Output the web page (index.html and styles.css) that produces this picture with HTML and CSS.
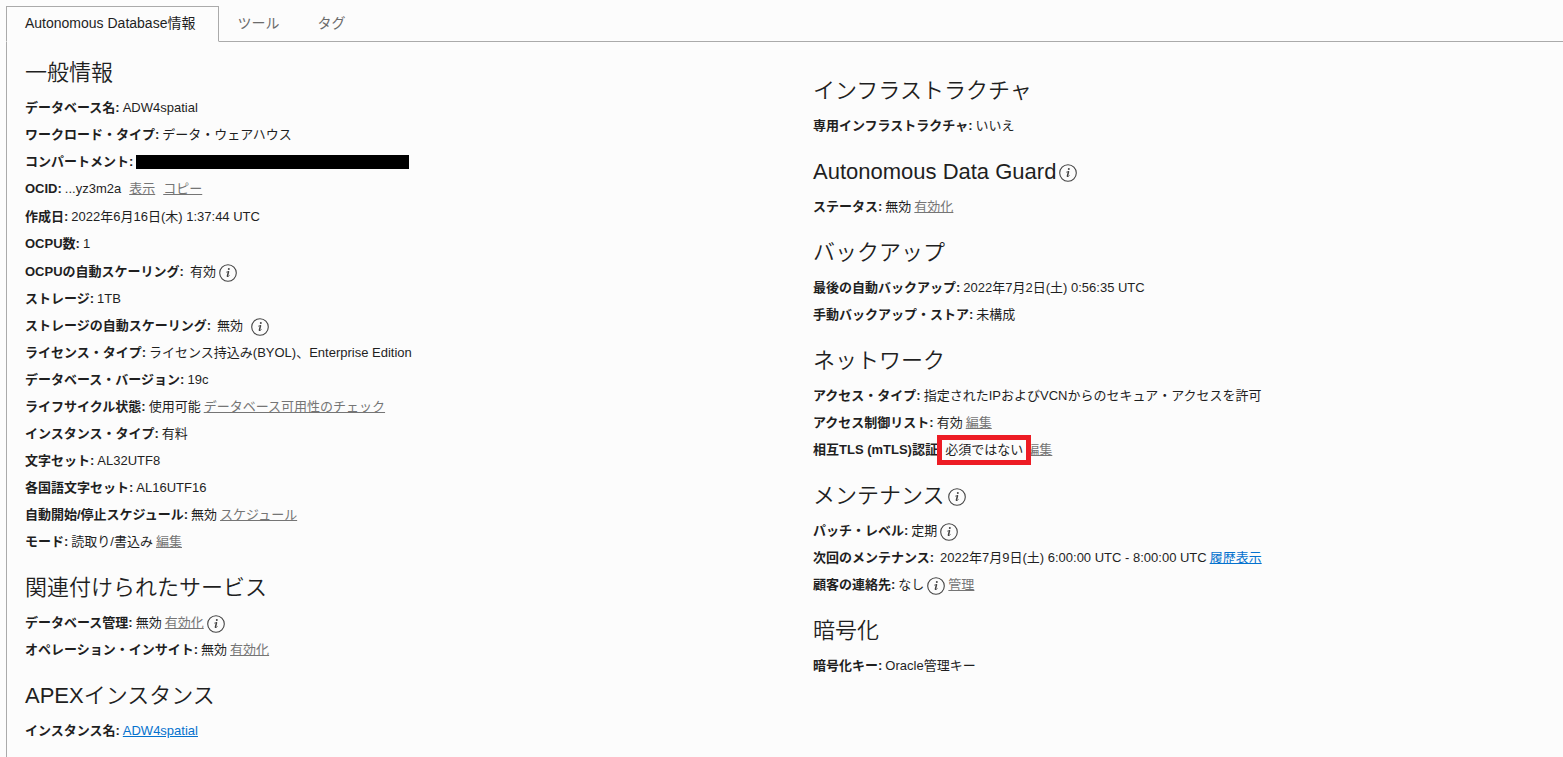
FILE: index.html
```html
<!DOCTYPE html>
<html lang="ja">
<head>
<meta charset="utf-8">
<meta name="viewport" content="width=device-width, initial-scale=1">
<title>Autonomous Database情報</title>
<link rel="stylesheet" href="styles.css">
</head>
<body>
<svg class="sprite" aria-hidden="true">
  <symbol id="info" viewBox="0 0 18 18">
    <circle cx="9" cy="9" r="8.3" fill="none" stroke="currentColor" stroke-width="1.1"/>
    <circle cx="9.8" cy="5.1" r="1" fill="currentColor"/>
    <path d="M7.6 8.1 9.4 7.6" fill="none" stroke="currentColor" stroke-width=".8" stroke-linecap="round"/>
    <path d="M9.5 7.8 8.4 12.2" fill="none" stroke="currentColor" stroke-width="1.5" stroke-linecap="round"/>
    <path d="M8.3 12.6Q8.9 13.2 10.3 11.7" fill="none" stroke="currentColor" stroke-width=".8" stroke-linecap="round"/>
  </symbol>
</svg>
<main class="details">
  <div class="tabs" role="tablist">
    <button class="tab tab-active" type="button" role="tab" aria-selected="true">Autonomous Database情報</button>
    <button class="tab" type="button" role="tab" aria-selected="false">ツール</button>
    <button class="tab" type="button" role="tab" aria-selected="false">タグ</button>
  </div>
  <div class="panel" role="tabpanel">
    <div class="column">
      <section class="group">
        <h2 class="heading">一般情報</h2>
        <dl class="list">
          <div class="row"><dt>データベース名:</dt><dd>ADW4spatial</dd></div>
          <div class="row"><dt>ワークロード・タイプ:</dt><dd>データ・ウェアハウス</dd></div>
          <div class="row"><dt>コンパートメント:</dt><dd class="redacted"></dd></div>
          <div class="row row-tall"><dt>OCID:</dt><dd class="spaced">...yz3m2a <a class="link" href="#">表示</a> <a class="link" href="#">コピー</a></dd></div>
          <div class="row"><dt>作成日:</dt><dd>2022年6月16日(木) 1:37:44 UTC</dd></div>
          <div class="row row-tall"><dt>OCPU数:</dt><dd>1</dd></div>
          <div class="row"><dt class="wide">OCPUの自動スケーリング:</dt><dd>有効 <button class="info" type="button" aria-label="情報"><svg><use href="#info"/></svg></button></dd></div>
          <div class="row"><dt>ストレージ:</dt><dd>1TB</dd></div>
          <div class="row"><dt class="wide">ストレージの自動スケーリング:</dt><dd class="spaced">無効 <button class="info" type="button" aria-label="情報"><svg><use href="#info"/></svg></button></dd></div>
          <div class="row"><dt>ライセンス・タイプ:</dt><dd>ライセンス持込み(BYOL)、Enterprise Edition</dd></div>
          <div class="row"><dt>データベース・バージョン:</dt><dd>19c</dd></div>
          <div class="row"><dt>ライフサイクル状態:</dt><dd>使用可能 <a class="link" href="#">データベース可用性のチェック</a></dd></div>
          <div class="row"><dt>インスタンス・タイプ:</dt><dd>有料</dd></div>
          <div class="row"><dt>文字セット:</dt><dd>AL32UTF8</dd></div>
          <div class="row"><dt>各国語文字セット:</dt><dd>AL16UTF16</dd></div>
          <div class="row"><dt>自動開始/停止スケジュール:</dt><dd>無効 <a class="link" href="#">スケジュール</a></dd></div>
          <div class="row"><dt>モード:</dt><dd>読取り/書込み <a class="link" href="#">編集</a></dd></div>
        </dl>
      </section>
      <section class="group">
        <h2 class="heading">関連付けられたサービス</h2>
        <dl class="list">
          <div class="row"><dt>データベース管理:</dt><dd>無効 <a class="link" href="#">有効化</a> <button class="info" type="button" aria-label="情報"><svg><use href="#info"/></svg></button></dd></div>
          <div class="row"><dt>オペレーション・インサイト:</dt><dd>無効 <a class="link" href="#">有効化</a></dd></div>
        </dl>
      </section>
      <section class="group">
        <h2 class="heading">APEXインスタンス</h2>
        <dl class="list">
          <div class="row"><dt>インスタンス名:</dt><dd><a class="link link-primary" href="#">ADW4spatial</a></dd></div>
        </dl>
      </section>
    </div>
    <div class="column column-side">
      <section class="group">
        <h2 class="heading">インフラストラクチャ</h2>
        <dl class="list">
          <div class="row"><dt>専用インフラストラクチャ:</dt><dd>いいえ</dd></div>
        </dl>
      </section>
      <section class="group">
        <h2 class="heading">Autonomous Data Guard <button class="info" type="button" aria-label="情報"><svg><use href="#info"/></svg></button></h2>
        <dl class="list">
          <div class="row"><dt>ステータス:</dt><dd>無効 <a class="link" href="#">有効化</a></dd></div>
        </dl>
      </section>
      <section class="group">
        <h2 class="heading">バックアップ</h2>
        <dl class="list">
          <div class="row"><dt>最後の自動バックアップ:</dt><dd>2022年7月2日(土) 0:56:35 UTC</dd></div>
          <div class="row"><dt>手動バックアップ・ストア:</dt><dd>未構成</dd></div>
        </dl>
      </section>
      <section class="group">
        <h2 class="heading">ネットワーク</h2>
        <dl class="list">
          <div class="row"><dt>アクセス・タイプ:</dt><dd>指定されたIPおよびVCNからのセキュア・アクセスを許可</dd></div>
          <div class="row"><dt>アクセス制御リスト:</dt><dd>有効 <a class="link" href="#">編集</a></dd></div>
          <div class="row"><dt>相互TLS (mTLS)認証:</dt><dd><span class="marked">必須ではない</span> <a class="link" href="#">編集</a></dd></div>
        </dl>
      </section>
      <section class="group">
        <h2 class="heading">メンテナンス <button class="info" type="button" aria-label="情報"><svg><use href="#info"/></svg></button></h2>
        <dl class="list">
          <div class="row"><dt>パッチ・レベル:</dt><dd>定期 <button class="info" type="button" aria-label="情報"><svg><use href="#info"/></svg></button></dd></div>
          <div class="row"><dt class="wide">次回のメンテナンス:</dt><dd>2022年7月9日(土) 6:00:00 UTC - 8:00:00 UTC <a class="link link-primary" href="#">履歴表示</a></dd></div>
          <div class="row"><dt>顧客の連絡先:</dt><dd>なし <button class="info" type="button" aria-label="情報"><svg><use href="#info"/></svg></button> <a class="link" href="#">管理</a></dd></div>
        </dl>
      </section>
      <section class="group">
        <h2 class="heading">暗号化</h2>
        <dl class="list">
          <div class="row"><dt>暗号化キー:</dt><dd>Oracle管理キー</dd></div>
        </dl>
      </section>
    </div>
  </div>
</main>
</body>
</html>
```
FILE: styles.css
```css
* {
  box-sizing: border-box;
}

body {
  margin: 0;
  background: #fcfcfc;
  color: #1f1f1f;
  font-family: "Liberation Sans", "Noto Sans CJK JP", sans-serif;
  font-size: 13px;
}

.sprite {
  display: none;
}

.details {
  display: flex;
  flex-direction: column;
  min-height: 100vh;
  padding: 6px 0 0 6px;
}

.tabs {
  display: flex;
}

.tabs::after {
  content: "";
  flex: 1;
  border-bottom: 1px solid #aaa;
}

.tab {
  height: 36px;
  padding: 0 20px 2px 18px;
  border: 0;
  border-bottom: 1px solid #aaa;
  background: none;
  color: #6b6b6b;
  font: inherit;
  font-size: 14px;
  line-height: 20px;
}

.tab-active {
  padding-right: 23px;
  border: 1px solid #aaa;
  border-bottom-color: transparent;
  color: #1f1f1f;
}

.panel {
  display: grid;
  flex: 1;
  grid-template-columns: 1fr 1fr;
  align-items: start;
  gap: 38px;
  padding: 17px 0 10px 18px;
  border-left: 1px solid #aaa;
}

.column {
  display: flex;
  flex-direction: column;
  gap: 19px;
}

.column-side {
  padding-top: 18px;
}

.group {
  display: flex;
  flex-direction: column;
  gap: 7px;
}

.heading {
  display: flex;
  align-items: center;
  gap: 3px;
  margin: 0;
  font-size: 22px;
  font-weight: 350;
  line-height: 28px;
}

.list {
  margin: 0;
}

.row {
  display: flex;
  align-items: center;
  gap: 3px;
  height: 27px;
  line-height: 20px;
  white-space: nowrap;
}

.row-tall {
  height: 28px;
}

dt {
  font-weight: 600;
}

.wide {
  padding-right: 3px;
}

dd {
  display: flex;
  align-items: center;
  gap: 3px;
  margin: 0;
}

.spaced {
  gap: 8px;
}

.redacted {
  width: 273px;
  height: 14px;
  background: #000;
}

.link {
  color: #757575;
  text-decoration: underline;
}

.link-primary {
  color: #0572ce;
}

.info {
  display: flex;
  padding: 2px 0 0;
  border: 0;
  background: none;
  color: #444;
}

.info svg {
  width: 18px;
  height: 18px;
}

.marked {
  position: relative;
}

.marked::after {
  content: "";
  position: absolute;
  z-index: 1;
  inset: -5px -8px;
  border: 5px solid #ed1c24;
}
```
